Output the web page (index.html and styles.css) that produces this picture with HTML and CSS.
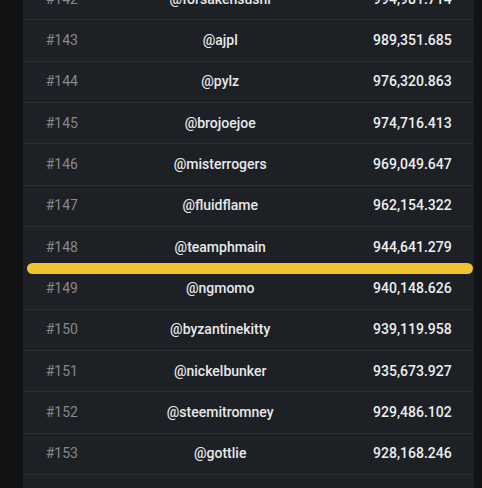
FILE: index.html
```html
<!DOCTYPE html>
<html>
<head>
<meta charset="utf-8">
<link rel="stylesheet" href="styles.css">
</head>
<body>
<div class="panel">
  <div class="row"><span class="rank">#142</span><span class="user">@forsakensushi</span><span class="score">994,981.714</span></div>
  <div class="row"><span class="rank">#143</span><span class="user">@ajpl</span><span class="score">989,351.685</span></div>
  <div class="row"><span class="rank">#144</span><span class="user">@pylz</span><span class="score">976,320.863</span></div>
  <div class="row"><span class="rank">#145</span><span class="user">@brojoejoe</span><span class="score">974,716.413</span></div>
  <div class="row"><span class="rank">#146</span><span class="user">@misterrogers</span><span class="score">969,049.647</span></div>
  <div class="row"><span class="rank">#147</span><span class="user">@fluidflame</span><span class="score">962,154.322</span></div>
  <div class="row marked"><span class="rank">#148</span><span class="user">@teamphmain</span><span class="score">944,641.279</span></div>
  <div class="row"><span class="rank">#149</span><span class="user">@ngmomo</span><span class="score">940,148.626</span></div>
  <div class="row"><span class="rank">#150</span><span class="user">@byzantinekitty</span><span class="score">939,119.958</span></div>
  <div class="row"><span class="rank">#151</span><span class="user">@nickelbunker</span><span class="score">935,673.927</span></div>
  <div class="row"><span class="rank">#152</span><span class="user">@steemitromney</span><span class="score">929,486.102</span></div>
  <div class="row"><span class="rank">#153</span><span class="user">@gottlie</span><span class="score">928,168.246</span></div>
</div>
</body>
</html>
```
FILE: styles.css
```css
html, body {
  margin: 0;
  padding: 0;
  background: #111315;
  height: 100%;
  overflow: hidden;
}
body {
  font-family: Roboto, "Liberation Sans", sans-serif;
  font-size: 14px;
}
.panel {
  margin-left: 23px;
  width: 451px;
  margin-top: -21px;
  background: #1d2024;
  min-height: 540px;
}
.row {
  display: grid;
  grid-template-columns: 80px 1fr 137px;
  align-items: center;
  height: 40.33px;
  border-bottom: 1px solid #2a2d31;
  padding: 0 22.3px 0 22.7px;
  box-sizing: content-box;
}
.rank {
  color: #86898d;
  padding-bottom: 1px;
}
.user {
  text-align: center;
  color: #e6e8ea;
  font-weight: 500;
  padding-bottom: 1px;
}
.score {
  text-align: right;
  color: #eceef0;
  font-weight: 500;
  padding-bottom: 1px;
}
.marked {
  position: relative;
}
.marked::after {
  content: "";
  position: absolute;
  left: 4px;
  right: 1px;
  bottom: -7px;
  height: 11px;
  border-radius: 6px;
  background: #f1c232;
}
```
